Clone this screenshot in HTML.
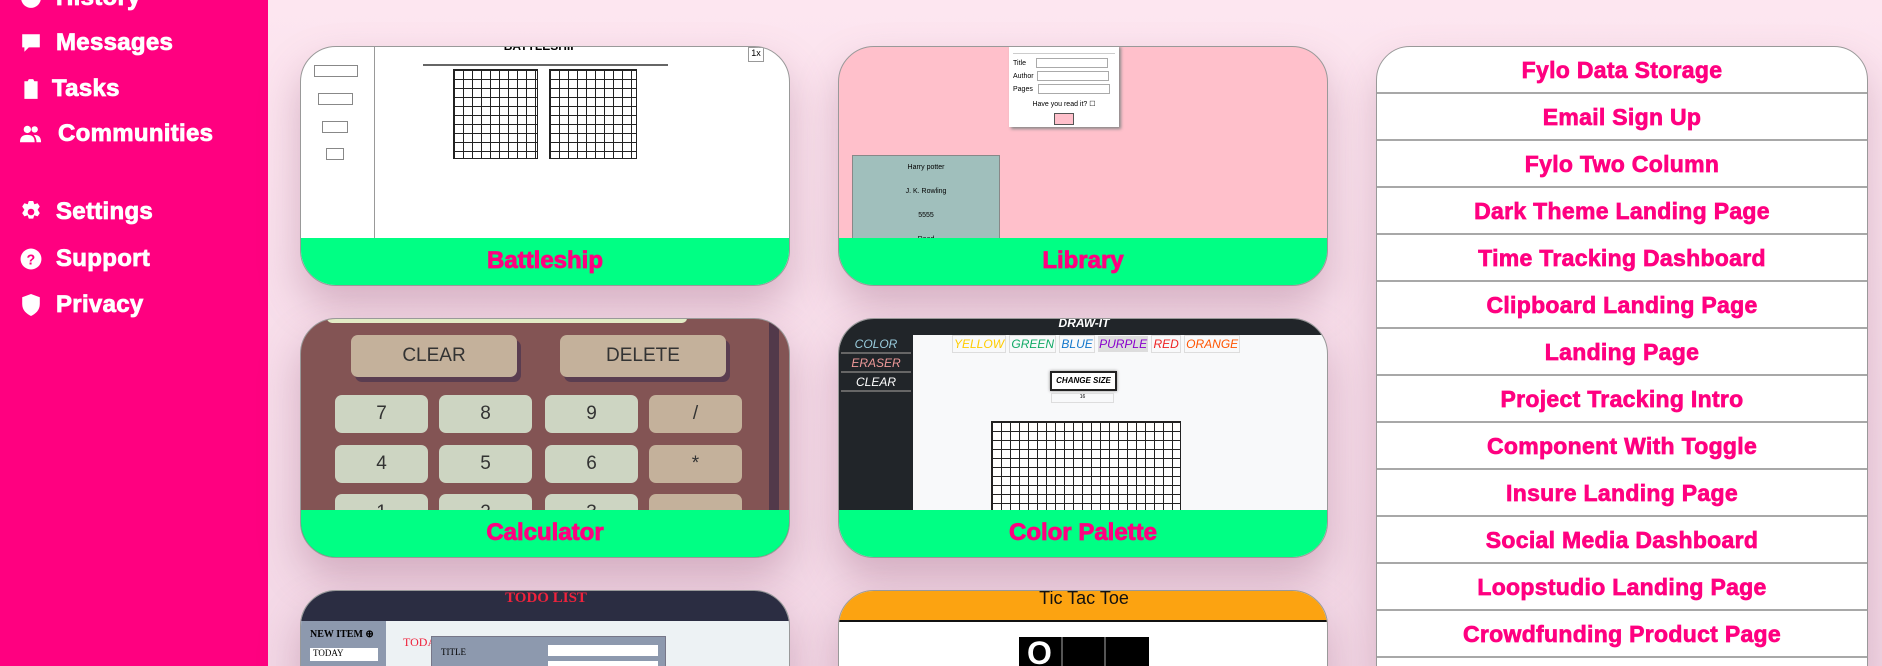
<!DOCTYPE html>
<html><head><meta charset="utf-8">
<style>
*{box-sizing:border-box;margin:0;padding:0}
html{width:1882px;height:666px;overflow:hidden}
body{width:1882px;height:666px;overflow:hidden;background:linear-gradient(180deg,#fde6f0 0%,#f6dce9 60%,#f3d8e6 100%);font-family:"Liberation Sans",sans-serif;position:relative}
.side{position:absolute;left:0;top:0;width:268px;height:666px;background:#ff0080}
.nav{position:absolute;left:20px;color:#fff;font-weight:bold;font-size:24px;display:flex;align-items:center;gap:14px;letter-spacing:.3px;-webkit-text-stroke:0.8px #fff}
.nav svg{width:22px;height:22px;fill:#fff}
.card{position:absolute;width:490px;height:240px;border-radius:36px;overflow:hidden;border:1px solid #999;background:#fff;box-shadow:0 20px 40px rgba(150,90,120,.35)}
.foot{position:absolute;left:0;right:0;bottom:0;height:47px;background:#00ff84;color:#ff0080;font-weight:bold;font-size:24px;text-align:center;line-height:45px;-webkit-text-stroke:0.8px #ff0080}
.ab{position:absolute}
.list{position:absolute;left:1376px;top:46px;width:492px;height:640px;background:#fff;border:1px solid #999;border-radius:34px 34px 0 0;overflow:hidden;box-shadow:0 20px 40px rgba(150,90,120,.3)}
.row{height:47px;border-bottom:2px solid #a8a8a8;color:#ff0080;font-weight:bold;font-size:23px;text-align:center;line-height:46px;letter-spacing:.3px;-webkit-text-stroke:0.7px #ff0080}
.grid{position:absolute;background-color:#fff;background-image:linear-gradient(#222 1px,transparent 1px),linear-gradient(90deg,#222 1px,transparent 1px);background-size:9px 9px;border:1px solid #222}
.cb{position:absolute;background:#cdd5c2;border-radius:7px;font-size:19px;color:#333;text-align:center;line-height:38px}
</style></head><body>
<div class="side">
<div class="nav" style="top:-16px"><svg viewBox="0 0 20 20"><circle cx="10" cy="10" r="9"/></svg>History</div>
<div class="nav" style="top:29px"><svg viewBox="0 0 20 20"><path d="M2 2h16v12H8l-4 4v-4H2z"/></svg>Messages</div>
<div class="nav" style="top:75px;gap:10px"><svg viewBox="0 0 20 20"><path d="M4 3h3l1-2h4l1 2h3v16H4z"/></svg>Tasks</div>
<div class="nav" style="top:120px;gap:16px"><svg viewBox="0 0 24 20"><circle cx="8" cy="5" r="4"/><circle cx="16" cy="5" r="3.5"/><path d="M0 19c0-6 3-8 8-8s8 2 8 8zM15 11c5 0 8 2 8 8h-5c0-3-1-6-3-8z"/></svg>Communities</div>
<div class="nav" style="top:198px"><svg viewBox="0 0 20 20"><path d="M8 0h4l1 3 3-1 2 3-2 3 2 3-2 3-3-1-1 3H8l-1-3-3 1-2-3 2-3-2-3 2-3 3 1z"/><circle cx="10" cy="10" r="3" fill="#ff0080"/></svg>Settings</div>
<div class="nav" style="top:245px"><svg viewBox="0 0 20 20"><circle cx="10" cy="10" r="9.5"/><text x="10" y="15" font-size="13" font-weight="bold" text-anchor="middle" fill="#ff0080" font-family="Liberation Sans">?</text></svg>Support</div>
<div class="nav" style="top:291px"><svg viewBox="0 0 20 20"><path d="M10 0l8 3v6c0 6-4 9-8 11-4-2-8-5-8-11V3z"/></svg>Privacy</div>
</div>

<!-- Battleship -->
<div class="card" style="left:300px;top:46px">
<div class="ab" style="left:73px;top:0;width:1px;height:200px;background:#999"></div>
<div class="ab" style="left:122px;top:17px;width:245px;height:2px;background:#666"></div>
<div class="ab" style="left:160px;top:-8px;width:160px;font-size:12px;font-weight:bold;text-align:center">BATTLESHIP</div>
<div class="grid" style="left:152px;top:22px;width:85px;height:90px"></div>
<div class="grid" style="left:248px;top:22px;width:88px;height:90px"></div>
<div class="ab" style="left:447px;top:0;width:16px;height:15px;border:1px solid #999;font-size:9px;text-align:center">1x</div>
<div class="ab" style="left:13px;top:18px;width:44px;height:12px;border:1px solid #888"></div>
<div class="ab" style="left:17px;top:46px;width:35px;height:12px;border:1px solid #888"></div>
<div class="ab" style="left:21px;top:74px;width:26px;height:12px;border:1px solid #888"></div>
<div class="ab" style="left:25px;top:101px;width:18px;height:12px;border:1px solid #888"></div>
<div class="foot">Battleship</div></div>

<!-- Library -->
<div class="card" style="left:838px;top:46px;background:#ffc0cb">
<div class="ab" style="left:170px;top:-2px;width:110px;height:82px;background:#fff;box-shadow:2px 2px 3px #888;font-size:7px;padding:8px 4px">
<div style="border-top:1px solid #ccc;margin-bottom:4px"></div>
<div>Title <span style="display:inline-block;width:72px;height:10px;border:1px solid #aaa;margin-left:8px;vertical-align:middle"></span></div>
<div style="margin-top:3px">Author <span style="display:inline-block;width:72px;height:10px;border:1px solid #aaa;margin-left:1px;vertical-align:middle"></span></div>
<div style="margin-top:3px">Pages <span style="display:inline-block;width:72px;height:10px;border:1px solid #aaa;margin-left:3px;vertical-align:middle"></span></div>
<div style="text-align:center;margin-top:6px">Have you read it? ☐</div>
<div style="margin:5px auto 0;width:20px;height:12px;background:#ffc0cb;border:1px solid #555"></div></div>
<div class="ab" style="left:13px;top:108px;width:148px;height:90px;background:#a0bfbc;border:1px solid #888;font-size:7px;text-align:center;line-height:24px">Harry potter<br>J. K. Rowling<br>5555<br>Read</div>
<div class="foot">Library</div></div>

<!-- Calculator -->
<div class="card" style="left:300px;top:318px;background:#835454">
<div class="ab" style="left:26px;top:-2px;width:360px;height:6px;background:#e1ebc5;border-radius:0 0 5px 5px"></div>
<div class="ab" style="left:468px;top:0;width:10px;height:200px;background:#52394a"></div>
<div class="ab" style="left:50px;top:16px;width:166px;height:42px;background:#c4b19b;border-radius:7px;box-shadow:4px 5px 0 #5a3d50;font-size:19px;color:#333;text-align:center;line-height:42px">CLEAR</div>
<div class="ab" style="left:259px;top:16px;width:166px;height:42px;background:#c4b19b;border-radius:7px;box-shadow:4px 5px 0 #5a3d50;font-size:19px;color:#333;text-align:center;line-height:42px">DELETE</div>
<div class="cb" style="left:34px;top:76px;width:93px;height:38px">7</div>
<div class="cb" style="left:138px;top:76px;width:93px;height:38px">8</div>
<div class="cb" style="left:244px;top:76px;width:93px;height:38px">9</div>
<div class="cb" style="left:348px;top:76px;width:93px;height:38px;background:#c4b19b">/</div>
<div class="cb" style="left:34px;top:126px;width:93px;height:38px">4</div>
<div class="cb" style="left:138px;top:126px;width:93px;height:38px">5</div>
<div class="cb" style="left:244px;top:126px;width:93px;height:38px">6</div>
<div class="cb" style="left:348px;top:126px;width:93px;height:38px;background:#c4b19b">*</div>
<div class="cb" style="left:34px;top:175px;width:93px;height:38px">1</div>
<div class="cb" style="left:138px;top:175px;width:93px;height:38px">2</div>
<div class="cb" style="left:244px;top:175px;width:93px;height:38px">3</div>
<div class="cb" style="left:348px;top:175px;width:93px;height:38px;background:#c4b19b"></div>
<div class="foot">Calculator</div></div>

<!-- Color Palette -->
<div class="card" style="left:838px;top:318px;background:#f8f9fa">
<div class="ab" style="left:0;top:0;width:490px;height:16px;background:#212529;color:#fff;font-size:12px;font-style:italic;font-weight:bold;text-align:center;line-height:8px">DRAW-IT</div>
<div class="ab" style="left:0;top:16px;width:74px;height:184px;background:#212529"></div>
<div class="ab" style="left:2px;top:18px;width:70px;height:17px;border-bottom:2px solid #666;color:#9cd;font-size:12px;font-style:italic;text-align:center">COLOR</div>
<div class="ab" style="left:2px;top:37px;width:70px;height:17px;border-bottom:2px solid #666;color:#e99;font-size:12px;font-style:italic;text-align:center">ERASER</div>
<div class="ab" style="left:2px;top:56px;width:70px;height:17px;border-bottom:2px solid #666;color:#fff;font-size:12px;font-style:italic;text-align:center">CLEAR</div>
<div class="ab" style="left:113px;top:18px;font-size:12px;font-style:italic;white-space:nowrap"><span style="color:#fc0;border:1px solid #ddd;padding:1px">YELLOW</span> <span style="color:#1a6;border:1px solid #ddd;padding:1px">GREEN</span> <span style="color:#17c;border:1px solid #ddd;padding:1px">BLUE</span> <span style="color:#80c;background:#ddd;padding:1px">PURPLE</span> <span style="color:#e22;border:1px solid #ddd;padding:1px">RED</span> <span style="color:#f50;border:1px solid #ddd;padding:1px">ORANGE</span></div>
<div class="ab" style="left:211px;top:52px;width:67px;height:20px;border:2px solid #222;background:#fff;font-size:8px;font-style:italic;font-weight:bold;text-align:center;line-height:16px;box-shadow:0 0 3px #888">CHANGE SIZE</div>
<div class="ab" style="left:212px;top:74px;width:63px;height:10px;border:1px solid #ddd;font-size:5px;text-align:center">16</div>
<div class="grid" style="left:152px;top:102px;width:190px;height:110px"></div>
<div class="foot">Color Palette</div></div>

<!-- Todo -->
<div class="card" style="left:300px;top:590px;background:#edf2f4">
<div class="ab" style="left:0;top:0;width:490px;height:30px;background:#2b2d42;color:#ef233c;font-family:'Liberation Serif',serif;font-weight:bold;font-size:15px;text-align:center;line-height:14px">TODO LIST</div>
<div class="ab" style="left:0;top:30px;width:85px;height:60px;background:#8d99ae"></div>
<div class="ab" style="left:9px;top:38px;font-family:'Liberation Serif',serif;font-size:10px;font-weight:bold">NEW ITEM ⊕</div>
<div class="ab" style="left:9px;top:57px;width:68px;height:13px;background:#fff;font-family:'Liberation Serif',serif;font-size:9px;padding-left:3px">TODAY</div>
<div class="ab" style="left:102px;top:44px;color:#ef233c;font-family:'Liberation Serif',serif;font-size:12px">TODAY</div>
<div class="ab" style="left:130px;top:45px;width:235px;height:40px;background:#8d99ae;border:1px solid #778"></div>
<div class="ab" style="left:140px;top:56px;font-family:'Liberation Serif',serif;font-size:9px">TITLE</div>
<div class="ab" style="left:247px;top:54px;width:110px;height:11px;background:#fff"></div>
<div class="ab" style="left:247px;top:70px;width:110px;height:11px;background:#fff"></div>
</div>

<!-- Tic Tac Toe -->
<div class="card" style="left:838px;top:590px">
<div class="ab" style="left:0;top:0;width:490px;height:31px;background:#fca311;border-bottom:2px solid #111;font-size:18px;text-align:center;line-height:14px;color:#111">Tic Tac Toe</div>
<div class="ab" style="left:180px;top:46px;width:130px;height:40px;background:#000"></div>
<div class="ab" style="left:222px;top:46px;width:2px;height:40px;background:#555"></div>
<div class="ab" style="left:265px;top:46px;width:2px;height:40px;background:#555"></div>
<div class="ab" style="left:188px;top:44px;color:#fff;font-size:32px;font-weight:bold">O</div>
</div>

<div class="list">
<div class="row">Fylo Data Storage</div>
<div class="row">Email Sign Up</div>
<div class="row">Fylo Two Column</div>
<div class="row">Dark Theme Landing Page</div>
<div class="row">Time Tracking Dashboard</div>
<div class="row">Clipboard Landing Page</div>
<div class="row">Landing Page</div>
<div class="row">Project Tracking Intro</div>
<div class="row">Component With Toggle</div>
<div class="row">Insure Landing Page</div>
<div class="row">Social Media Dashboard</div>
<div class="row">Loopstudio Landing Page</div>
<div class="row">Crowdfunding Product Page</div>
<div class="row">&nbsp;</div>
</div>
</body></html>
